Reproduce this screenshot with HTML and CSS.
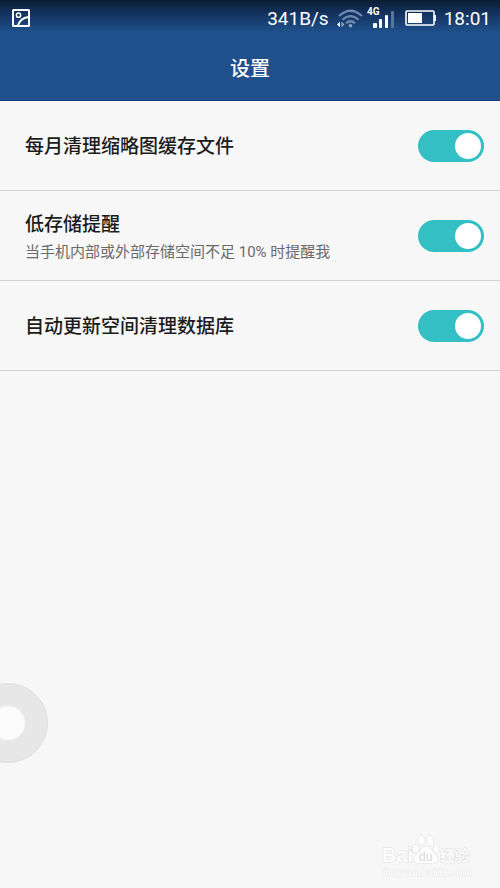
FILE: index.html
```html
<!DOCTYPE html>
<html lang="zh-CN">
<head>
<meta charset="utf-8">
<meta name="viewport" content="width=device-width, initial-scale=1">
<title>设置</title>
<link rel="stylesheet" href="styles.css">
</head>
<body>
<header class="header">
  <div class="status">
    <svg class="status-picture" width="18" height="18" viewBox="0 0 18 18" fill="none" stroke="currentColor" stroke-width="2" aria-hidden="true">
      <rect x="1" y="1" width="16" height="16" rx="0.500"/>
      <circle cx="6.500" cy="6.200" r="2.100" stroke-width="1.500"/>
      <path d="M6 16C7.500 12 11 8.500 17 8"/>
    </svg>
    <span class="speed">341B/s</span>
    <svg class="wifi" width="26" height="19" viewBox="0 0 26 19" fill="none" aria-hidden="true">
      <g stroke="#7088b0" stroke-width="2.200">
        <path d="M2 7Q13.500 -3.500 25 7"/>
        <path d="M5.500 10.800Q13.500 3.500 21.500 10.800"/>
        <path d="M9 14.300Q13.500 10.200 18 14.300"/>
      </g>
      <circle cx="13.500" cy="16.700" r="1.800" fill="#8fa3c2"/>
      <path d="M0 15.500L3 12.800V18.200Z" fill="#fff"/>
      <path d="M4.500 12.500L7.500 15.500L4.500 18.500Z" fill="#8fa3c2"/>
    </svg>
    <svg class="signal" width="27" height="22" viewBox="0 0 27 22" aria-hidden="true">
      <text class="network" x="0" y="8">4G</text>
      <g fill="#fff">
        <rect x="6" y="16" width="4" height="5" rx="1"/>
        <rect x="12" y="12" width="3" height="9" rx="1"/>
        <rect x="18" y="8" width="3" height="13" rx="1"/>
      </g>
      <rect x="24" y="4" width="3" height="17" rx="1" fill="#59759f"/>
    </svg>
    <svg class="battery" width="32" height="16" viewBox="0 0 32 16" aria-hidden="true">
      <rect x="1" y="1" width="28" height="14" rx="1" fill="none" stroke="#fff" stroke-width="1.600"/>
      <rect x="3" y="3" width="14" height="10" fill="#fff"/>
      <path d="M29 5h2v6h-2z" fill="#fff"/>
    </svg>
    <time class="clock">18:01</time>
  </div>
  <h1 class="title">设置</h1>
</header>
<main class="settings">
  <label class="row">
    <span class="name">每月清理缩略图缓存文件</span>
    <input class="switch" type="checkbox" role="switch" checked>
  </label>
  <label class="row">
    <span class="text">
      <span class="name">低存储提醒</span>
      <span class="hint">当手机内部或外部存储空间不足 10% 时提醒我</span>
    </span>
    <input class="switch" type="checkbox" role="switch" checked>
  </label>
  <label class="row">
    <span class="name">自动更新空间清理数据库</span>
    <input class="switch" type="checkbox" role="switch" checked>
  </label>
</main>
<button class="float-button" type="button" aria-label="悬浮按钮"></button>
<svg class="watermark" width="92" height="48" viewBox="0 0 92 48" role="img" aria-label="Baidu 经验">
  <g class="mark">
    <text class="brand" x="0" y="28">Bai</text>
    <ellipse cx="34" cy="15" rx="3" ry="4" transform="rotate(-15 34 15)"/>
    <ellipse cx="39.500" cy="6.500" rx="3.300" ry="4.700"/>
    <ellipse cx="48" cy="6.500" rx="3.300" ry="4.700"/>
    <ellipse cx="54.500" cy="15" rx="3" ry="4" transform="rotate(15 54.500 15)"/>
    <path d="M44 12.500C39.500 12.500 38.500 17 35.500 19.500C30 24 32 30 38 29.500Q44 28.500 50 29.500C56 30 58 24 52.500 19.500C49.500 17 48.500 12.500 44 12.500Z"/>
    <text class="du" x="37" y="27">du</text>
    <text class="cjk" x="58" y="27">经验</text>
    <text class="site" x="1" y="42">jingyan.baidu.com</text>
  </g>
</svg>
</body>
</html>
```
FILE: styles.css
```css
* {
  box-sizing: border-box;
}

body {
  margin: 0;
  min-height: 100vh;
  background: #f7f7f7;
  color: #1c1c1c;
  font-family: Roboto, "Noto Sans CJK SC", sans-serif;
}

.header {
  background: linear-gradient(#0b1c33 0, #12305b 12px, #1f508b 32px);
  border-bottom: 1px solid #173f78;
  color: #fff;
}

.status {
  display: flex;
  align-items: center;
  height: 36px;
  padding: 0 9px 0 12px;
}

.speed {
  margin-left: auto;
  font-size: 19px;
}

.wifi {
  margin-left: 8px;
}

.signal {
  margin: 0 11px 0 4px;
}

.network {
  fill: #fff;
  font-size: 10px;
  font-weight: 700;
}

.clock {
  margin-left: 7px;
  font-size: 19px;
}

.title {
  margin: 0;
  padding-top: 2px;
  font-size: 20px;
  font-weight: 500;
  line-height: 62px;
  text-align: center;
}

.row {
  display: flex;
  align-items: center;
  justify-content: space-between;
  min-height: 90px;
  padding: 0 16px 0 25px;
  border-bottom: 1px solid #d2d2d2;
}

.text {
  display: flex;
  flex-direction: column;
}

.name {
  padding-top: 2px;
  font-size: 19px;
  font-weight: 500;
  line-height: 30px;
}

.hint {
  color: #6a6a6a;
  font-size: 15px;
  line-height: 24px;
}

.switch {
  appearance: none;
  display: flex;
  flex: none;
  width: 66px;
  height: 32px;
  margin: 0;
  padding: 3px;
  border-radius: 16px;
  background: #b8b8b8;
}

.switch::before {
  content: "";
  width: 26px;
  height: 26px;
  border-radius: 50%;
  background: #fff;
}

.switch:checked {
  justify-content: flex-end;
  background: #33bfc4;
}

.float-button {
  position: fixed;
  bottom: 125px;
  left: -32px;
  width: 80px;
  height: 80px;
  padding: 0;
  border: 1px solid #dedede;
  border-radius: 50%;
  background: radial-gradient(circle, #fbfbfb 16px, #e7e7e7 18px);
}

.watermark {
  position: fixed;
  right: 26px;
  bottom: 6px;
  overflow: visible;
}

.mark {
  fill: #fdfdfd;
  stroke: #dcdcdc;
  stroke-width: 1px;
  paint-order: stroke;
}

.brand {
  font: 700 20px "Liberation Sans", sans-serif;
}

.du {
  fill: #d4d4d4;
  stroke: none;
  font: 12px "Liberation Sans", sans-serif;
}

.cjk {
  font: 700 15px "Noto Sans CJK SC", sans-serif;
}

.site {
  stroke: #e8e8e8;
  font: 11px "Liberation Sans", sans-serif;
}
```
